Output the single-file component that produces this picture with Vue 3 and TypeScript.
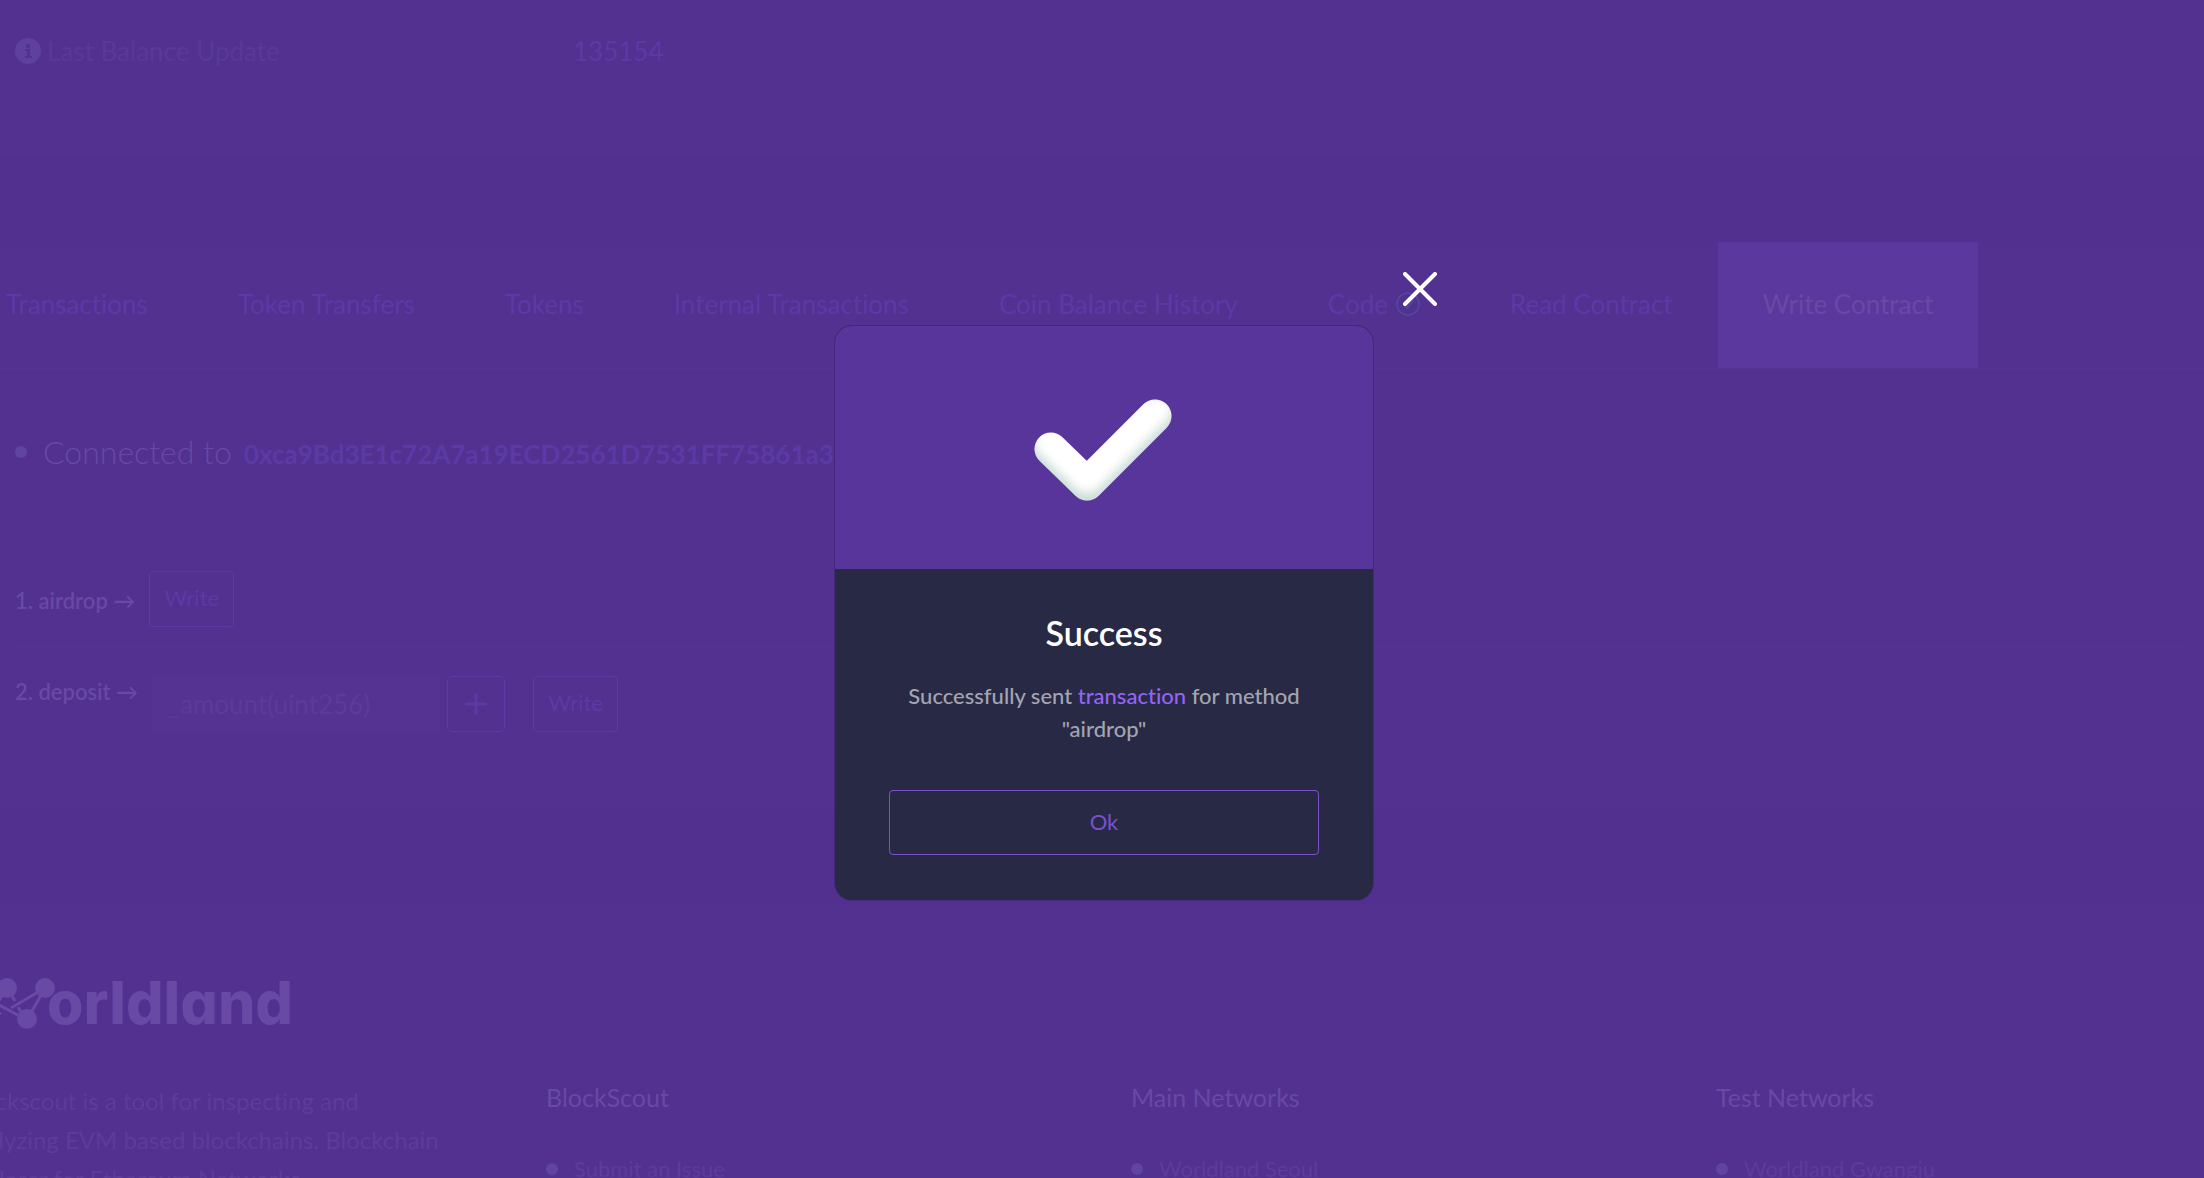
<script setup lang="ts">
interface FooterColumn {
  title: string
  links: string[]
}

const tabs: string[] = [
  'Transactions',
  'Token Transfers',
  'Tokens',
  'Internal Transactions',
  'Coin Balance History',
  'Code',
  'Read Contract',
  'Write Contract',
]

const columns: FooterColumn[] = [
  { title: 'BlockScout', links: ['Submit an Issue'] },
  { title: 'Main Networks', links: ['Worldland Seoul'] },
  { title: 'Test Networks', links: ['Worldland Gwangju'] },
]
</script>

<template>
  <div class="page">
    <section class="overview">
      <dl class="detail">
        <dt>
          <svg class="info" viewBox="0 0 26 26" aria-hidden="true">
            <circle cx="13" cy="13" r="13" fill="#5e409f" />
            <rect x="11" y="6" width="4" height="4" rx="1" fill="#523191" />
            <path d="M10 11h5v7h2v2h-7v-2h2v-5h-2z" fill="#523191" />
          </svg>
          Last Balance Update
        </dt>
        <dd><a href="#block">135154</a></dd>
      </dl>
    </section>

    <main class="card">
      <nav class="tabs">
        <a v-for="tab in tabs" :key="tab" href="#tab" class="tab" :class="{ active: tab === 'Write Contract' }">
          {{ tab }}
          <svg v-if="tab === 'Code'" class="verified" viewBox="0 0 26 26" aria-hidden="true">
            <circle cx="13" cy="13" r="12" fill="none" stroke="#4f469a" stroke-width="2" />
            <path d="M8 13l4 4 7-8" fill="none" stroke="#4f469a" stroke-width="2" />
          </svg>
        </a>
      </nav>

      <div class="contract">
        <h2 class="connected">
          <span class="dot"></span>
          Connected to
          <a href="#address">0xca9Bd3E1c72A7a19ECD2561D7531FF75861a3470</a>
        </h2>

        <form class="method" @submit.prevent>
          <span class="name">1. airdrop →</span>
          <button type="submit" class="outline">Write</button>
        </form>

        <form class="method second" @submit.prevent>
          <label class="name" for="amount">2. deposit →</label>
          <input id="amount" type="text" placeholder="_amount(uint256)" />
          <button type="button" class="outline plus" aria-label="Add zeros">
            <svg viewBox="0 0 22 22" aria-hidden="true">
              <path d="M11 1v20M1 11h20" stroke="currentColor" stroke-width="3" stroke-linecap="round" />
            </svg>
          </button>
          <button type="submit" class="outline">Write</button>
        </form>
      </div>
    </main>

    <footer class="footer">
      <div class="logo">
        <svg viewBox="0 0 94 52" aria-hidden="true">
          <g stroke="#6849a4" stroke-width="3" fill="none">
            <path d="M46 11 26 43M46 11 54 24M57 30 65 43M84 11 66 43M84 11 50 31M40 36 22 46M38 28 66 43" />
          </g>
          <g fill="#6849a4">
            <circle cx="10" cy="11" r="9" />
            <circle cx="46" cy="11" r="10" />
            <circle cx="84" cy="11" r="10" />
            <circle cx="27" cy="42" r="9" />
            <circle cx="66" cy="42" r="10" />
          </g>
        </svg>
        <span>orldland</span>
      </div>
      <div class="columns">
        <p class="about">
          Blockscout is a tool for inspecting and<br />
          analyzing EVM based blockchains. Blockchain<br />
          explorer for Ethereum Networks.
        </p>
        <div v-for="column in columns" :key="column.title" class="column">
          <h3>{{ column.title }}</h3>
          <ul>
            <li v-for="link in column.links" :key="link">
              <span class="dot"></span><a href="#network">{{ link }}</a>
            </li>
          </ul>
        </div>
      </div>
    </footer>

    <div class="overlay">
      <div class="modal" role="dialog" aria-labelledby="modal-title">
        <button type="button" class="close" aria-label="Close">
          <svg viewBox="0 0 34 34" aria-hidden="true">
            <path d="M2 2 32 32M32 2 2 32" stroke="#fff" stroke-width="4" stroke-linecap="round" />
          </svg>
        </button>
        <div class="modal-head">
          <svg viewBox="0 0 140 104" aria-hidden="true">
            <defs>
              <filter id="inner-shade" x="0" y="0" width="140" height="104" filterUnits="userSpaceOnUse">
                <feOffset in="SourceAlpha" dy="-8" />
                <feGaussianBlur stdDeviation="5" result="shifted" />
                <feComposite in="SourceAlpha" in2="shifted" operator="out" result="edge" />
                <feFlood flood-color="#5fa890" flood-opacity="0.45" />
                <feComposite in2="edge" operator="in" result="shade" />
                <feMerge>
                  <feMergeNode in="SourceGraphic" />
                  <feMergeNode in="shade" />
                </feMerge>
              </filter>
            </defs>
            <path
              d="M17 51 53 86 121 18"
              fill="none"
              stroke="#fff"
              stroke-width="33"
              stroke-linecap="round"
              stroke-linejoin="round"
              filter="url(#inner-shade)"
            />
          </svg>
        </div>
        <div class="modal-body">
          <h1 id="modal-title">Success</h1>
          <p>Successfully sent <a href="#transaction">transaction</a> for method "airdrop"</p>
          <button type="button" class="ok">Ok</button>
        </div>
      </div>
    </div>
  </div>
</template>

<style>
body {
  margin: 0;
  background: #513090;
}
</style>

<style scoped>
.page {
  position: relative;
  height: 100vh;
  overflow: hidden;
  background: #513090;
  color: #6849a4;
  font-family: Lato, "Noto Sans", sans-serif;
  font-size: 26px;
  font-variant-ligatures: none;
  line-height: 32px;
}

a {
  color: #5b3aa6;
  text-decoration: none;
}

h1, h2, h3, p, ul, dl, dd {
  margin: 0;
  padding: 0;
}

button, input {
  box-sizing: border-box;
  padding: 0;
  font: inherit;
}

.overview {
  box-sizing: border-box;
  height: 156px;
  margin-bottom: 86px;
  padding: 35px 15px;
  background: #523191;
}

.detail {
  display: flex;
}

.detail dt {
  display: flex;
  align-items: center;
  gap: 6px;
  width: 558px;
  color: #593999;
}

.info {
  width: 26px;
  height: 26px;
}

.card {
  background: #523191;
}

.tabs {
  display: flex;
  margin-left: -39px;
  border-bottom: 2px solid #543393;
}

.tab {
  display: flex;
  align-items: center;
  gap: 8px;
  height: 124px;
  padding: 0 45px 2px;
  line-height: 30px;
  white-space: nowrap;
}

.tab.active {
  background: #5b389e;
  color: #6949a5;
}

.verified {
  width: 24px;
  height: 24px;
}

.contract {
  padding: 62px 15px 82px;
}

.connected {
  display: flex;
  align-items: baseline;
  height: 40px;
  font-size: 32px;
  font-weight: 300;
  line-height: 40px;
}

.connected a {
  margin-left: 12px;
  font-size: 26px;
  font-weight: 700;
}

.dot {
  flex: none;
  align-self: center;
  width: 12px;
  height: 12px;
  margin-right: 16px;
  border-radius: 50%;
  background: #5f44a0;
}

.method {
  display: flex;
  height: 56px;
  margin-top: 99px;
  padding-bottom: 19px;
  font-size: 22px;
}

.name {
  margin-right: 14px;
  padding-top: 14px;
  font-weight: 600;
}

.second {
  margin-top: 0;
  padding: 29px 0 0;
  border-top: 1px solid #553494;
}

.second .name {
  padding-top: 0;
}

.outline {
  width: 85px;
  height: 56px;
  padding-bottom: 2px;
  border: 1px solid #5b3aa6;
  border-radius: 4px;
  background: transparent;
  color: #5b3aa6;
}

.plus {
  display: flex;
  align-items: center;
  justify-content: center;
  width: 58px;
  margin: 0 28px 0 7px;
  padding: 0;
}

.plus svg {
  width: 22px;
  height: 22px;
}

input {
  width: 288px;
  height: 56px;
  padding: 0 16px;
  border: 0;
  background: #543393;
  font-size: 26px;
}

input::placeholder {
  color: #5b3b9b;
  opacity: 1;
}

.footer {
  margin-top: 90px;
  padding-top: 73px;
  height: 400px;
  background: #523191;
}

.logo {
  display: flex;
  align-items: center;
  height: 52px;
  margin-left: -39px;
  font-family: Inter, sans-serif;
  font-feature-settings: "cv11";
  font-size: 59px;
  font-weight: 800;
}

.logo svg {
  width: 94px;
  height: 52px;
  margin-right: -8px;
}

.columns {
  display: grid;
  grid-template-columns: repeat(4, 585px);
  margin-left: -39px;
  margin-top: 52px;
}

.about {
  color: #5c3c9c;
  font-size: 24px;
  line-height: 39px;
}

.column h3 {
  font-size: 25px;
  font-weight: 400;
}

.column li {
  display: flex;
  align-items: center;
  margin-top: 40px;
  font-size: 22px;
}

.column li a {
  color: #5c3c9c;
}

.overlay {
  position: absolute;
  inset: 0;
  display: flex;
  justify-content: center;
  align-items: flex-start;
  padding: 325px 0 0 4px;
}

.modal {
  position: relative;
  box-sizing: border-box;
  width: 540px;
  border: 1px solid #43287c;
  border-radius: 18px;
  background: #282945;
}

.close {
  position: absolute;
  top: -54px;
  right: -64px;
  width: 34px;
  height: 34px;
  border: 0;
  background: transparent;
}

.close svg {
  display: block;
}

.modal-head {
  display: flex;
  justify-content: center;
  padding: 72px 0 67px;
  border-radius: 17px 17px 0 0;
  background: #57359b;
}

.modal-head svg {
  width: 140px;
  height: 104px;
}

.modal-body {
  padding: 44px 54px 45px;
  text-align: center;
}

.modal-body h1 {
  color: #fff;
  font-size: 34px;
  font-weight: 600;
  line-height: 40px;
}

.modal-body p {
  margin: 26px 0 45px;
  color: #a3a5b2;
  font-size: 22px;
  font-weight: 500;
  line-height: 33px;
}

.modal-body p a {
  color: #9564f5;
}

.ok {
  width: 100%;
  height: 65px;
  padding-bottom: 2px;
  border: 1px solid #7a50cf;
  border-radius: 4px;
  background: transparent;
  color: #7a50cf;
  font-size: 22px;
}
</style>
